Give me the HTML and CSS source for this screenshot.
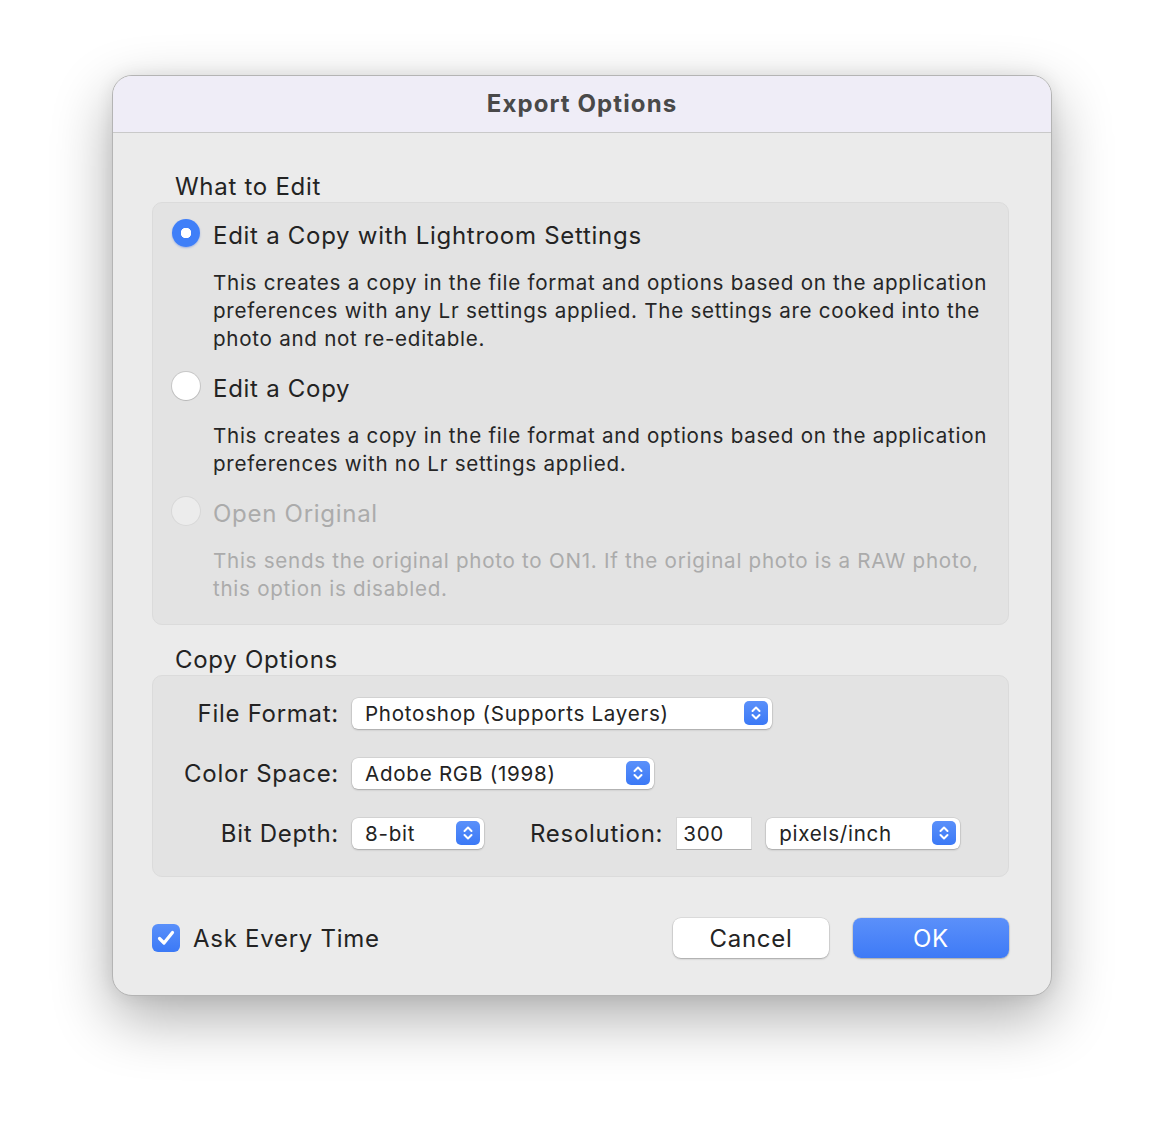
FILE: index.html
```html
<!DOCTYPE html>
<html lang="en">
<head>
  <meta charset="UTF-8">
  <meta name="viewport" content="width=device-width, initial-scale=1.0">
  <title>Export Options</title>
  <link rel="stylesheet" href="styles.css">
</head>
<body>
  <div class="window">
    <div class="titlebar">Export Options</div>

    <div class="content">
      <div class="section-label">What to Edit</div>
      <div class="group edit-group">
        <div class="option">
          <div class="option-row">
            <span class="radio checked"></span>
            <span class="option-title">Edit a Copy with Lightroom Settings</span>
          </div>
          <p class="option-desc">This creates a copy in the file format and options based on the application preferences with any Lr settings applied. The settings are cooked into the photo and not re-editable.</p>
        </div>
        <div class="option">
          <div class="option-row">
            <span class="radio"></span>
            <span class="option-title">Edit a Copy</span>
          </div>
          <p class="option-desc">This creates a copy in the file format and options based on the application preferences with no Lr settings applied.</p>
        </div>
        <div class="option disabled">
          <div class="option-row">
            <span class="radio"></span>
            <span class="option-title">Open Original</span>
          </div>
          <p class="option-desc">This sends the original photo to ON1. If the original photo is a RAW photo, this option is disabled.</p>
        </div>
      </div>

      <div class="section-label">Copy Options</div>
      <div class="group copy-group">
        <div class="form-row">
          <span class="field-label">File Format:</span>
          <div class="popup popup-format">
            <span>Photoshop (Supports Layers)</span>
            <span class="popup-arrow">
              <svg width="24" height="24" viewBox="0 0 24 24"><path d="M8.5 10 12 6.5 15.5 10M8.5 14 12 17.5 15.5 14" fill="none" stroke="#fff" stroke-width="2" stroke-linecap="round" stroke-linejoin="round"/></svg>
            </span>
          </div>
        </div>
        <div class="form-row">
          <span class="field-label">Color Space:</span>
          <div class="popup popup-space">
            <span>Adobe RGB (1998)</span>
            <span class="popup-arrow">
              <svg width="24" height="24" viewBox="0 0 24 24"><path d="M8.5 10 12 6.5 15.5 10M8.5 14 12 17.5 15.5 14" fill="none" stroke="#fff" stroke-width="2" stroke-linecap="round" stroke-linejoin="round"/></svg>
            </span>
          </div>
        </div>
        <div class="form-row">
          <span class="field-label">Bit Depth:</span>
          <div class="popup popup-depth">
            <span>8-bit</span>
            <span class="popup-arrow">
              <svg width="24" height="24" viewBox="0 0 24 24"><path d="M8.5 10 12 6.5 15.5 10M8.5 14 12 17.5 15.5 14" fill="none" stroke="#fff" stroke-width="2" stroke-linecap="round" stroke-linejoin="round"/></svg>
            </span>
          </div>
          <span class="res-label">Resolution:</span>
          <div class="text-field">300</div>
          <div class="popup popup-units">
            <span>pixels/inch</span>
            <span class="popup-arrow">
              <svg width="24" height="24" viewBox="0 0 24 24"><path d="M8.5 10 12 6.5 15.5 10M8.5 14 12 17.5 15.5 14" fill="none" stroke="#fff" stroke-width="2" stroke-linecap="round" stroke-linejoin="round"/></svg>
            </span>
          </div>
        </div>
      </div>

      <div class="footer">
        <label class="check">
          <span class="checkbox">
            <svg width="28" height="28" viewBox="0 0 28 28"><path d="M7.5 14.5 12 19 20.5 8.5" fill="none" stroke="#fff" stroke-width="3.2" stroke-linecap="round" stroke-linejoin="round"/></svg>
          </span>
          <span>Ask Every Time</span>
        </label>
        <div class="buttons">
          <button class="btn">Cancel</button>
          <button class="btn btn-primary">OK</button>
        </div>
      </div>
    </div>
  </div>
</body>
</html>
```

FILE: styles.css
```css
* {
  box-sizing: border-box;
}
html {
  background: #ffffff;
}
body {
  margin: 0;
  min-height: 1144px;
  padding-top: 75px;
  font-family: Inter, "Noto Sans", sans-serif;
  letter-spacing: 0.72px;
  color: #232323;
}
.window {
  width: 940px;
  margin-left: 112px;
  background: #ebebeb;
  border: 1px solid #b4b4b4;
  border-radius: 20px;
  overflow: hidden;
  box-shadow: 0 22px 60px rgba(0,0,0,0.32), 0 0 18px rgba(0,0,0,0.08);
}
.titlebar {
  height: 57px;
  background: #efedf7;
  border-bottom: 1px solid #c9c9c9;
  text-align: center;
  line-height: 56px;
  font-size: 24px;
  font-weight: 700;
  letter-spacing: 1.1px;
  color: #494949;
}
.content {
  padding: 40px 42px 37px 39px;
}
.section-label {
  font-size: 24px;
  line-height: 28px;
  padding-left: 23px;
  margin-bottom: 1px;
}
.group {
  background: #e3e3e3;
  border: 1px solid #dbdbdb;
  border-radius: 10px;
}
.edit-group {
  padding: 14px 20px 4px 19px;
  margin-bottom: 21px;
}
.option-row {
  display: flex;
  align-items: center;
  height: 32px;
  gap: 13px;
}
.radio {
  width: 28px;
  height: 28px;
  border-radius: 50%;
  background: #ffffff;
  box-shadow: 0 0 0 1px rgba(0,0,0,0.12), 0 1px 1px rgba(0,0,0,0.08);
  flex: none;
}
.radio.checked {
  background: radial-gradient(circle, #ffffff 0 5px, #3f7ff8 5.5px);
  box-shadow: 0 1px 2px rgba(40,90,220,0.35);
}
.option-title {
  font-size: 24px;
  margin-top: 4px;
}
.option-desc {
  margin: 20px 0 17px 41px;
  font-size: 20.6px;
  line-height: 28px;
  color: #262626;
}
.option.disabled .radio {
  background: #ececec;
  box-shadow: 0 0 0 1px rgba(0,0,0,0.05);
}
.option.disabled .option-title,
.option.disabled .option-desc {
  color: #ababab;
}
.copy-group {
  padding: 21px 20px 27px 20px;
  display: flex;
  flex-direction: column;
  gap: 28px;
}
.form-row {
  display: flex;
  align-items: center;
  height: 32px;
}
.field-label {
  width: 166px;
  text-align: right;
  font-size: 24px;
  margin-right: 13px;
}
.popup {
  height: 31px;
  background: #ffffff;
  border-radius: 6px;
  box-shadow: 0 0 0 0.5px rgba(0,0,0,0.12), 0 1px 2px rgba(0,0,0,0.22);
  display: flex;
  align-items: center;
  justify-content: space-between;
  padding: 0 4px 0 13px;
  font-size: 20.6px;
}
.popup-arrow {
  width: 24px;
  height: 24px;
  border-radius: 5px;
  background: linear-gradient(#5a90fa, #3b79f6);
  display: flex;
}
.popup-format {
  width: 420px;
}
.popup-space {
  width: 302px;
}
.popup-depth {
  width: 132px;
}
.res-label {
  font-size: 24px;
  margin-left: 46px;
  margin-right: 13px;
}
.text-field {
  width: 76px;
  height: 33px;
  background: #ffffff;
  border: 1px solid #d6d6d6;
  border-bottom-color: #b0b0b0;
  padding: 3px 0 0 6px;
  font-size: 20.6px;
  margin-right: 14px;
}
.popup-units {
  width: 194px;
}
.footer {
  display: flex;
  align-items: center;
  justify-content: space-between;
  margin-top: 41px;
}
.check {
  display: flex;
  align-items: center;
  gap: 13px;
  font-size: 24px;
}
.checkbox {
  width: 28px;
  height: 28px;
  border-radius: 6px;
  background: linear-gradient(#5a90fa, #3b79f6);
  display: flex;
}
.buttons {
  display: flex;
  gap: 24px;
}
.btn {
  width: 156px;
  height: 40px;
  border: none;
  border-radius: 8px;
  background: #ffffff;
  box-shadow: 0 0 0 0.5px rgba(0,0,0,0.12), 0 1px 2px rgba(0,0,0,0.25);
  font-family: inherit;
  font-size: 24px;
  letter-spacing: 0.72px;
  color: #232323;
}
.btn-primary {
  background: linear-gradient(#5b90fa, #3e7af6);
  color: #ffffff;
}
```
